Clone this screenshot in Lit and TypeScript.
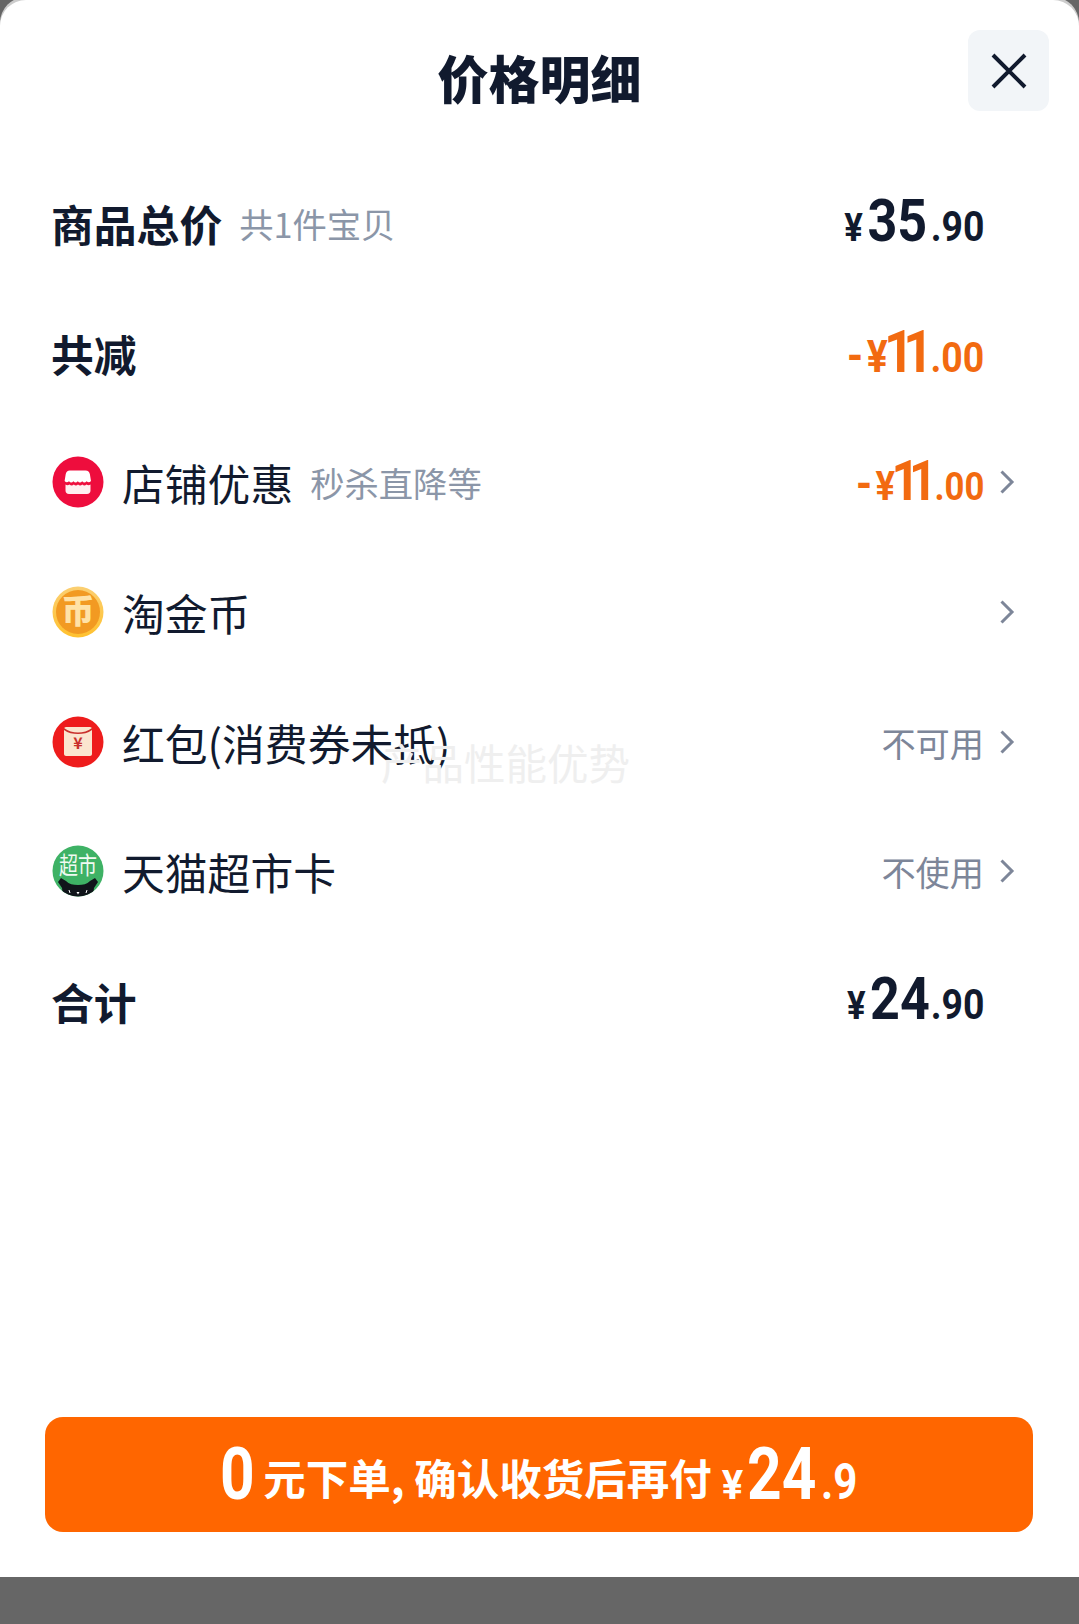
import { LitElement, html, css, svg } from "lit";
import { customElement } from "lit/decorators.js";

const storeIcon = html`<svg class="icon" viewBox="0 0 52 52">
  <circle cx="26" cy="26" r="25.500" fill="#ee0d3d" />
  <path d="M18.500 14.500h15c2.600 0 4 1.500 4.400 3.800l1.100 6.700c-1.400 1.700-3 1.700-4.400.2-1.500 1.600-3 1.600-4.400 0-1.500 1.600-3 1.600-4.400 0-1.400 1.600-2.900 1.600-4.400 0-1.400 1.600-2.900 1.600-4.400 0-1.400 1.500-3 1.500-4.400-.2l1.100-6.700c.4-2.300 1.800-3.800 4.200-3.800z" fill="#fff" />
  <path d="M13.500 28.500c1.300 1.100 2.700 1 4 .1 1.400 1.300 2.900 1.300 4.300 0 1.400 1.300 2.900 1.300 4.200 0 1.400 1.300 2.900 1.300 4.300 0 1.400 1.300 2.800 1.300 4.200 0 1.300.9 2.700 1 4-.1v6c0 2.200-1.300 3.500-3.500 3.500H17c-2.200 0-3.500-1.300-3.500-3.500z" fill="#ffeef0" />
</svg>`;

const coinIcon = html`<svg class="icon" viewBox="0 0 52 52">
  <defs>
    <linearGradient id="coin-ring" x1="0" y1="0" x2="0" y2="1">
      <stop offset="0" stop-color="#fbcf72" />
      <stop offset="1" stop-color="#ffc12e" />
    </linearGradient>
  </defs>
  <circle cx="26" cy="26" r="25.500" fill="url(#coin-ring)" />
  <circle cx="26" cy="26" r="22" fill="#f29a22" />
  <text x="26" y="37" text-anchor="middle" class="coin-glyph">币</text>
</svg>`;

const packetIcon = html`<svg class="icon" viewBox="0 0 52 52">
  <circle cx="26" cy="26" r="25.500" fill="#ee1c1c" />
  <path d="M14 11h24c1 0 2 .8 2 2v25c0 1.200-1 2-2 2H14c-1 0-2-.8-2-2V13c0-1.200 1-2 2-2z" fill="#fbe6cf" />
  <path d="M12 12v2c4 3 9 4 14 4s10-1 14-4v-2c-4 3-9 4.500-14 4.500S16 15 12 12z" fill="#c9302b" />
  <text x="26" y="33" text-anchor="middle" class="packet-glyph">¥</text>
</svg>`;

const marketIcon = html`<svg class="icon" viewBox="0 0 52 52">
  <defs><clipPath id="mk"><circle cx="26" cy="26" r="25.500" /></clipPath></defs>
  <circle cx="26" cy="26" r="25.500" fill="#3eb265" />
  <text x="26" y="29" text-anchor="middle" textLength="38" lengthAdjust="spacingAndGlyphs" class="market-glyph">超市</text>
  <g clip-path="url(#mk)">
    <path d="M6 37l3-4 5 3c3 3 7 4 12 4s9-1 12-4l5-3 3 4-4 6-1 9H11l-1-9z" fill="#10141a" />
    <path d="M24.500 47h3l-1.500 2.500z" fill="#fff" />
    <path d="M17 45l1 3M35 45l-1 3" stroke="#fff" stroke-width="1" />
  </g>
</svg>`;

const chevron = svg`<svg class="chevron" viewBox="0 0 16 26"><path d="M2.500 2.500L13 13 2.500 23.500" fill="none" stroke="#7d8699" stroke-width="3" /></svg>`;

@customElement("app-root")
export class AppRoot extends LitElement {
  static styles = css`
    :host {
      display: block;
      height: 1624px;
      background: #666;
      font-family: "Noto Sans CJK SC", "Liberation Sans", sans-serif;
      color: #111a2e;
      position: relative;
      overflow: hidden;
    }
    .sheet {
      height: 1577px;
      background: #fff;
      border-radius: 26px 26px 0 0;
      display: flex;
      flex-direction: column;
      box-shadow: 0 -3px 0 #ccc;
    }
    .head {
      height: 158px;
      display: flex;
      justify-content: center;
      position: relative;
    }
    .title {
      margin-top: 43px;
      font-size: 51px;
      line-height: 68px;
      font-weight: 900;
    }
    .close {
      position: absolute;
      top: 30px;
      right: 30px;
      width: 81px;
      height: 81px;
      border-radius: 12px;
      background: #f2f5f8;
      display: flex;
      align-items: center;
      justify-content: center;
    }
    .close svg {
      width: 38px;
      height: 38px;
    }
    .rows {
      display: flex;
      flex-direction: column;
      padding: 0 64px 0 52px;
    }
    .row {
      height: 129.700px;
      display: flex;
      align-items: center;
      gap: 18px;
    }
    .label {
      font-size: 42.800px;
      line-height: 56px;
    }
    .label.strong {
      font-weight: 700;
      margin-left: -1px;
    }
    .note {
      font-size: 34.300px;
      color: #8b96a8;
      margin-left: -1px;
    }
    .right {
      margin-left: auto;
      display: flex;
      align-items: center;
      position: relative;
      padding-right: 31px;
    }
    .chevron {
      position: absolute;
      right: 0;
      top: 50%;
      width: 16px;
      height: 26px;
      margin-top: -13px;
    }
    .status {
      font-size: 34.200px;
      line-height: 50px;
      color: #7d8699;
    }
    .price {
      font-family: "Roboto", sans-serif;
      font-weight: 700;
      display: flex;
      align-items: baseline;
      line-height: 60px;
      margin-top: 4px;
      transform: scaleX(0.89);
      transform-origin: right center;
    }
    .price.off {
      color: #f26a10;
    }
    .price .cur {
      font-size: 39px;
      margin-right: 5px;
    }
    .price.off .cur {
      font-size: 44px;
      margin-right: -4px;
    }
    .price .minus {
      font-size: 46px;
      margin-right: 4px;
    }
    .price .int {
      font-size: 58.500px;
      margin-right: 4px;
    }
    .price .int.ones {
      letter-spacing: -12px;
      margin-right: 9px;
    }
    .price .int.tight {
      margin-right: 1px;
    }
    .price .dec {
      font-size: 42px;
    }
    .price.sm .int {
      font-size: 55px;
    }
    .price.sm .dec {
      font-size: 39px;
    }
    .price.sm .cur {
      font-size: 41px;
    }
    .icon {
      width: 52px;
      height: 52px;
      flex: none;
    }
    .coin-glyph {
      font-size: 33px;
      font-weight: 900;
      fill: #ffe2a6;
    }
    .packet-glyph {
      font-size: 16px;
      font-weight: 700;
      fill: #c9302b;
    }
    .market-glyph {
      font-size: 24px;
      fill: #f0faf2;
    }
    .watermark {
      position: absolute;
      left: 381px;
      top: 734px;
      font-size: 41.500px;
      line-height: 56px;
      color: #efefef;
      text-shadow: 0 0 1px #fff;
    }
    .foot {
      margin-top: auto;
      padding: 0 46px 45px 45px;
    }
    .pay {
      height: 115px;
      border-radius: 18px;
      background: #ff6600;
      color: #fff;
      text-align: center;
      white-space: nowrap;
      font-weight: 700;
      line-height: 115px;
      font-size: 42.500px;
      padding-left: 6px;
    }
    .pay .words {
      vertical-align: 4px;
    }
    .pay .num,
    .pay .cur,
    .pay .dec {
      font-family: "Roboto", sans-serif;
      display: inline-block;
      transform: scaleX(0.84);
    }
    .pay .num {
      font-size: 72px;
      transform-origin: left center;
    }
    .pay .zero {
      margin-right: 2px;
    }
    .pay .years {
      margin-right: -9px;
    }
    .pay .cur {
      font-size: 40px;
      margin: 0 4px 0 10px;
      transform: none;
    }
    .pay .dec {
      font-size: 50px;
      transform-origin: left center;
    }
  `;

  private price(int: string, dec: string, off = false, sm = false) {
    const fit = int === "11" ? "ones" : int === "24" ? "tight" : "";
    return html`<span class="price ${off ? "off" : ""} ${sm ? "sm" : ""}">
      ${off ? html`<span class="minus">-</span>` : ""}<span class="cur">¥</span><span class="int ${fit}">${int}</span><span class="dec">.${dec}</span>
    </span>`;
  }

  render() {
    return html`
      <div class="sheet">
        <div class="head">
          <div class="title">价格明细</div>
          <div class="close">
            <svg viewBox="0 0 38 38"><path d="M3 3l32 32M35 3L3 35" stroke="#111a2e" stroke-width="4" fill="none" /></svg>
          </div>
        </div>
        <div class="rows">
          <div class="row">
            <span class="label strong">商品总价</span><span class="note">共1件宝贝</span>
            <div class="right">${this.price("35", "90")}</div>
          </div>
          <div class="row">
            <span class="label strong">共减</span>
            <div class="right">${this.price("11", "00", true)}</div>
          </div>
          <div class="row">
            ${storeIcon}<span class="label">店铺优惠</span><span class="note">秒杀直降等</span>
            <div class="right">${this.price("11", "00", true, true)}${chevron}</div>
          </div>
          <div class="row">
            ${coinIcon}<span class="label">淘金币</span>
            <div class="right">${chevron}</div>
          </div>
          <div class="row">
            ${packetIcon}<span class="label">红包(消费券未抵)</span>
            <div class="right"><span class="status">不可用</span>${chevron}</div>
          </div>
          <div class="row">
            ${marketIcon}<span class="label">天猫超市卡</span>
            <div class="right"><span class="status">不使用</span>${chevron}</div>
          </div>
          <div class="row">
            <span class="label strong">合计</span>
            <div class="right">${this.price("24", "90")}</div>
          </div>
        </div>
        <div class="foot">
          <div class="pay">
            <span class="num zero">0</span><span class="words">元下单, 确认收货后再付</span><span class="cur">¥</span><span class="num years">24</span><span class="dec">.9</span>
          </div>
        </div>
      </div>
      <div class="watermark">产品性能优势</div>
    `;
  }
}
